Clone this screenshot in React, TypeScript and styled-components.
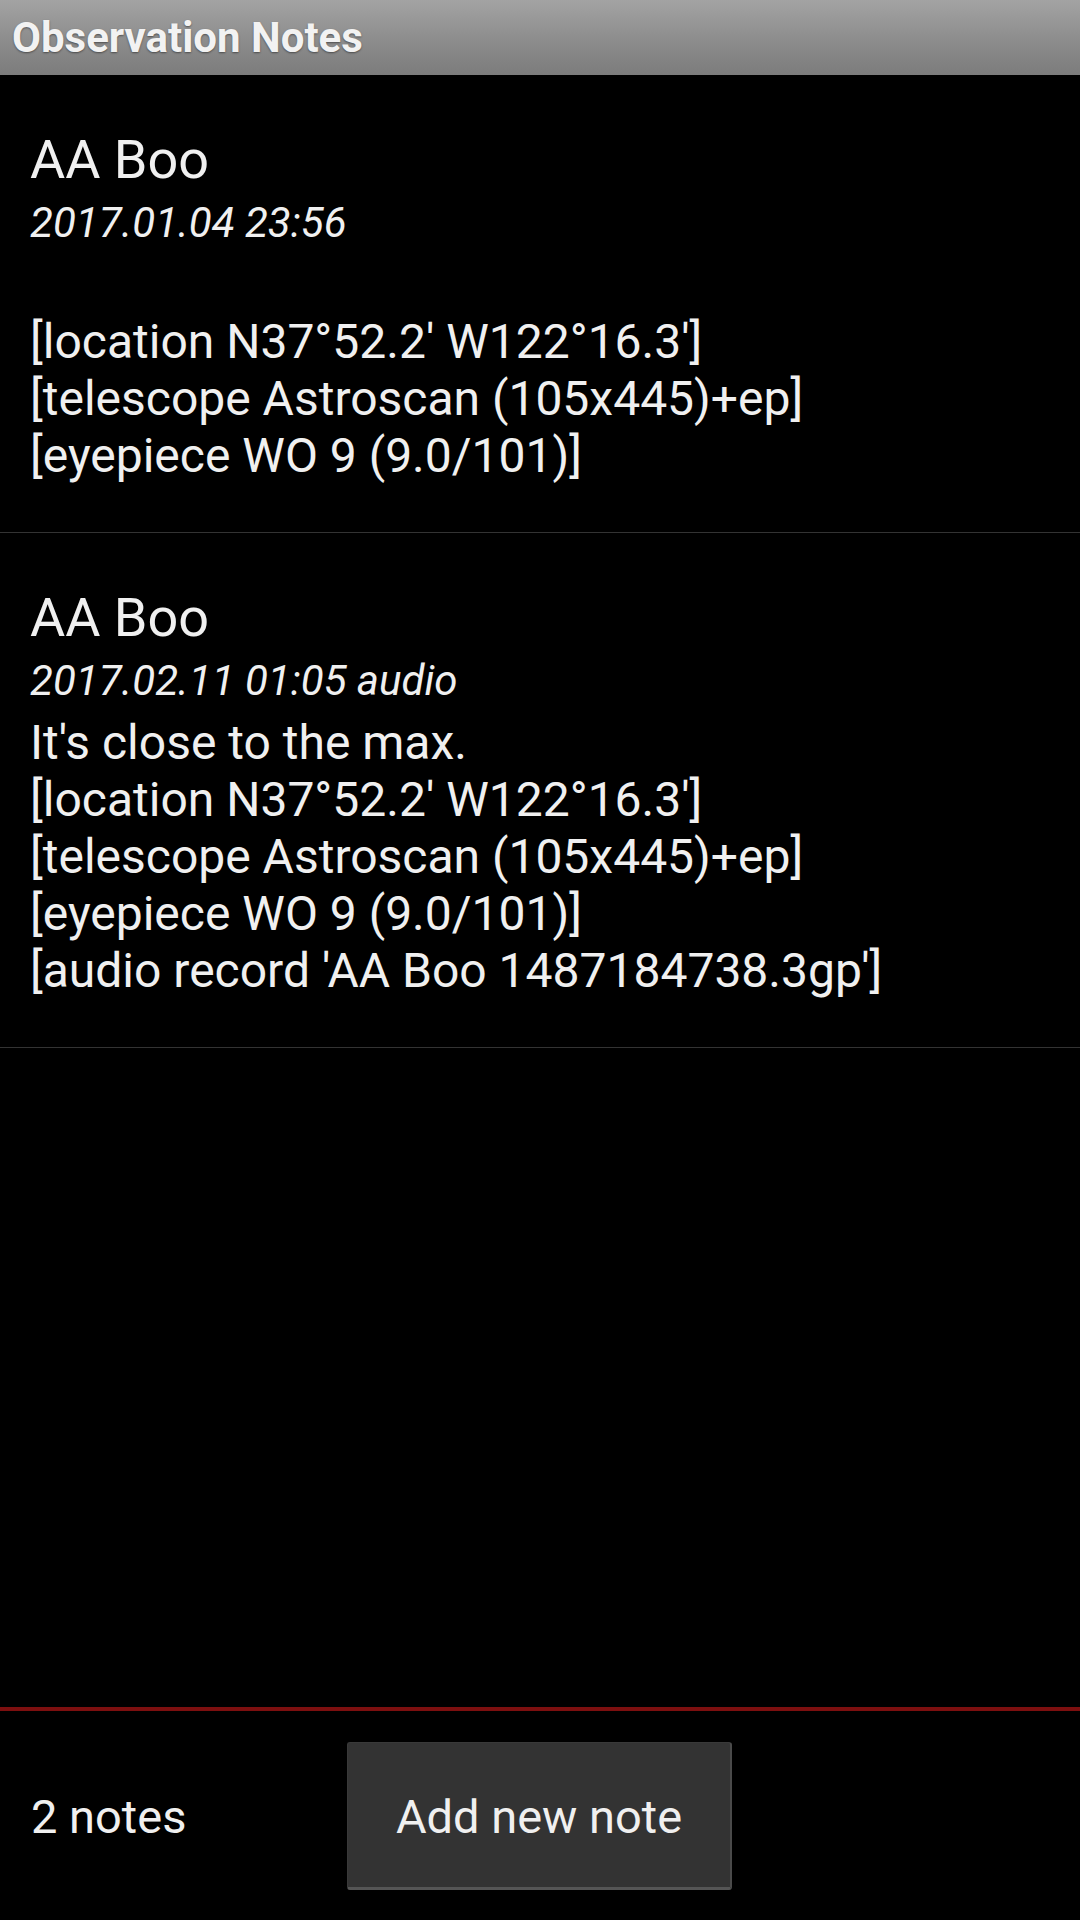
import React from 'react';
import styled, { createGlobalStyle } from 'styled-components';

const GlobalStyle = createGlobalStyle`
    html, body {
        margin: 0;
        padding: 0;
        background: #000;
    }
`

const notes = [
    {
        id: 1,
        object: 'AA Boo',
        date: '2017.01.04 23:56',
        lines: [
            '',
            "[location N37°52.2' W122°16.3']",
            '[telescope Astroscan (105x445)+ep]',
            '[eyepiece WO 9 (9.0/101)]',
        ],
    },
    {
        id: 2,
        object: 'AA Boo',
        date: '2017.02.11 01:05 audio',
        lines: [
            "It's close to the max.",
            "[location N37°52.2' W122°16.3']",
            '[telescope Astroscan (105x445)+ep]',
            '[eyepiece WO 9 (9.0/101)]',
            "[audio record 'AA Boo 1487184738.3gp']",
        ],
    },
]

const App = () => {
    return (
        <Screen>
            <GlobalStyle />
            <TitleBar>
                <Title>Observation Notes</Title>
            </TitleBar>
            <NoteList>
                {notes.map((note) => (
                    <NoteItem key={note.id}>
                        <ObjectName>{note.object}</ObjectName>
                        <NoteDate>{note.date}</NoteDate>
                        {note.lines.map((line, index) => (
                            <NoteLine key={index}>{line || '\u00a0'}</NoteLine>
                        ))}
                    </NoteItem>
                ))}
            </NoteList>
            <Footer>
                <Count>{notes.length} notes</Count>
                <AddButton>Add new note</AddButton>
            </Footer>
        </Screen>
    )
}

// CSS styles
const Screen = styled.div`
    height: 1920px;
    width: 1080px;
    display: flex;
    flex-direction: column;
    background: #000;
    color: #f0f0f0;
    font-family: Roboto, "Noto Sans", sans-serif;
`

const TitleBar = styled.div`
    height: 75px;
    flex-shrink: 0;
    display: flex;
    align-items: center;
    padding-left: 12px;
    background: linear-gradient(to bottom, #a3a3a3 0%, #8a8a8a 60%, #7c7c7c 100%);
`

const Title = styled.h1`
    margin: 0;
    font-size: 42px;
    font-weight: 700;
    color: #f2f2f2;
    text-shadow: 0 1px 2px rgba(0, 0, 0, 0.45);
`

const NoteList = styled.div`
    flex: 1;
    display: flex;
    flex-direction: column;
`

const NoteItem = styled.div`
    padding: 55px 30px 48px;
    border-bottom: 1px solid #333;
`

const ObjectName = styled.div`
    font-size: 54px;
    line-height: 60px;
`

const NoteDate = styled.div`
    font-size: 42px;
    font-style: italic;
    line-height: 66px;
`

const NoteLine = styled.div`
    font-size: 48px;
    line-height: 57px;
`

const Footer = styled.div`
    height: 209px;
    flex-shrink: 0;
    display: flex;
    align-items: center;
    border-top: 4px solid #7d0f0f;
    padding-left: 31px;
`

const Count = styled.div`
    width: 316px;
    font-size: 47px;
    padding-top: 2px;
`

const AddButton = styled.button`
    width: 385px;
    height: 148px;
    background: #333;
    border: 1px solid #393939;
    border-right: 2px solid #4a4a4a;
    border-bottom: 3px solid #555;
    border-radius: 3px;
    color: #f0f0f0;
    font-family: Roboto, "Noto Sans", sans-serif;
    font-size: 47px;
    padding: 4px 0 0;
`

export default App;
